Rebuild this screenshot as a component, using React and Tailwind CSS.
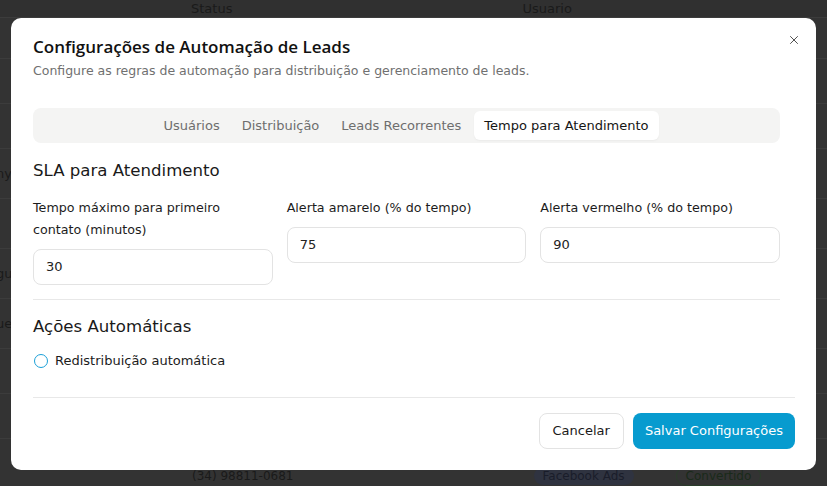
import React from 'react';
import { X } from 'lucide-react';

const rows = [
    { h: 'h-[41px]', left: '' },
    { h: 'h-[45px]', left: '' },
    { h: 'h-[45px]', left: '' },
    { h: 'h-[50px]', left: 'ny' },
    { h: 'h-[50px]', left: '' },
    { h: 'h-[50px]', left: 'gu' },
    { h: 'h-[50px]', left: 'ue' },
    { h: 'h-[45px]', left: '' },
    { h: 'h-[45px]', left: '' },
];

const Field = ({ label, value }) => (
    <div className="flex flex-col">
        <label className="text-[12.7px] leading-[22px] text-[#1c1c1c]">{label}</label>
        <div className="mt-[8px] h-[36px] rounded-[8px] border border-[#e3e3e3] px-[12px] flex items-center text-[13px] text-[#222]">
            {value}
        </div>
    </div>
);

export default function App() {
    return (
        <div
            className="relative w-[827px] h-[486px] overflow-hidden bg-[#333333]"
            style={{ fontFamily: '"DejaVu Sans", "Noto Sans", sans-serif' }}
        >
            {/* table behind the overlay */}
            <div className="h-[18px] border-b border-[#3c3c3c] bg-[#303030] flex items-end text-[13px] text-[#1a1a1a]">
                <span className="ml-[191px] leading-[16px]">Status</span>
                <span className="ml-[290px] leading-[16px]">Usuario</span>
            </div>
            {rows.map((r, i) => (
                <div key={i} className={`${r.h} border-b border-[#3c3c3c] flex items-center text-[13px] text-[#1a1a1a]`}>
                    <span className="ml-[-4px]">{r.left}</span>
                </div>
            ))}
            <div className="absolute left-0 bottom-0 w-full h-[20px] flex items-center text-[12px] text-[#1a1a1a]">
                <span className="ml-[192px]">(34) 98811-0681</span>
                <span className="ml-[240px] px-[9px] rounded-full bg-[#2f3340] text-[#1a1d2a]">Facebook Ads</span>
                <span className="ml-[42px] px-[9px] rounded-full border border-[#2b3d2b] text-[#1a2a1a]">Convertido</span>
            </div>

            {/* modal */}
            <div className="absolute left-[11px] top-[18px] w-[805px] h-[452px] rounded-[10px] bg-white pl-[22px] pr-[21px] pt-[17px]">
                <button className="absolute right-[15px] top-[15px] text-[#444]">
                    <X size={14} strokeWidth={1.6} />
                </button>

                <div className="pr-[15px]">
                    <h2
                        className="text-[17px] leading-[24px] font-semibold text-[#111]"
                        style={{ fontFamily: '"Open Sans", sans-serif' }}
                    >
                        Configurações de Automação de Leads
                    </h2>
                    <p className="mt-[2px] text-[12.5px] leading-[20px] text-[#707070]">
                        Configure as regras de automação para distribuição e gerenciamento de leads.
                    </p>

                    <div className="mt-[27px] h-[35px] rounded-[8px] bg-[#f4f4f3] flex items-center justify-center gap-[4px] text-[13px]">
                        <span className="px-[9px] text-[#6e6e6e]">Usuários</span>
                        <span className="px-[9px] text-[#6e6e6e]">Distribuição</span>
                        <span className="px-[9px] text-[#6e6e6e]">Leads Recorrentes</span>
                        <span className="h-[29px] px-[10px] rounded-[6px] bg-white flex items-center text-[#151515] shadow-[0_1px_2px_rgba(0,0,0,0.04)]">
                            Tempo para Atendimento
                        </span>
                    </div>

                    <h3 className="mt-[16px] text-[16.6px] leading-[24px] text-[#1a1a1a]">SLA para Atendimento</h3>

                    <div className="mt-[14px] grid grid-cols-3 gap-[14px] items-start">
                        <Field label={<>Tempo máximo para primeiro<br />contato (minutos)</>} value="30" />
                        <Field label="Alerta amarelo (% do tempo)" value="75" />
                        <Field label="Alerta vermelho (% do tempo)" value="90" />
                    </div>

                    <div className="mt-[14px] h-px bg-[#e8e8e8]" />

                    <h3 className="mt-[15px] text-[16.6px] leading-[24px] text-[#1a1a1a]">Ações Automáticas</h3>

                    <div className="mt-[12px] h-[20px] flex items-center gap-[7px] text-[13px] text-[#1c1c1c]">
                        <span className="ml-[1px] w-[14px] h-[14px] rounded-full border-[1.5px] border-[#1ba0d8]" />
                        <span>Redistribuição automática</span>
                    </div>
                </div>

                <div className="mt-[26px] h-px bg-[#e8e8e8]" />

                <div className="mt-[15px] flex justify-end gap-[9px] text-[13px]">
                    <button className="h-[36px] px-[13px] rounded-[8px] border border-[#e3e3e3] bg-white text-[#1a1a1a]">
                        Cancelar
                    </button>
                    <button className="h-[36px] px-[12px] rounded-[8px] bg-[#079bcf] text-white">
                        Salvar Configurações
                    </button>
                </div>
            </div>
        </div>
    );
}
